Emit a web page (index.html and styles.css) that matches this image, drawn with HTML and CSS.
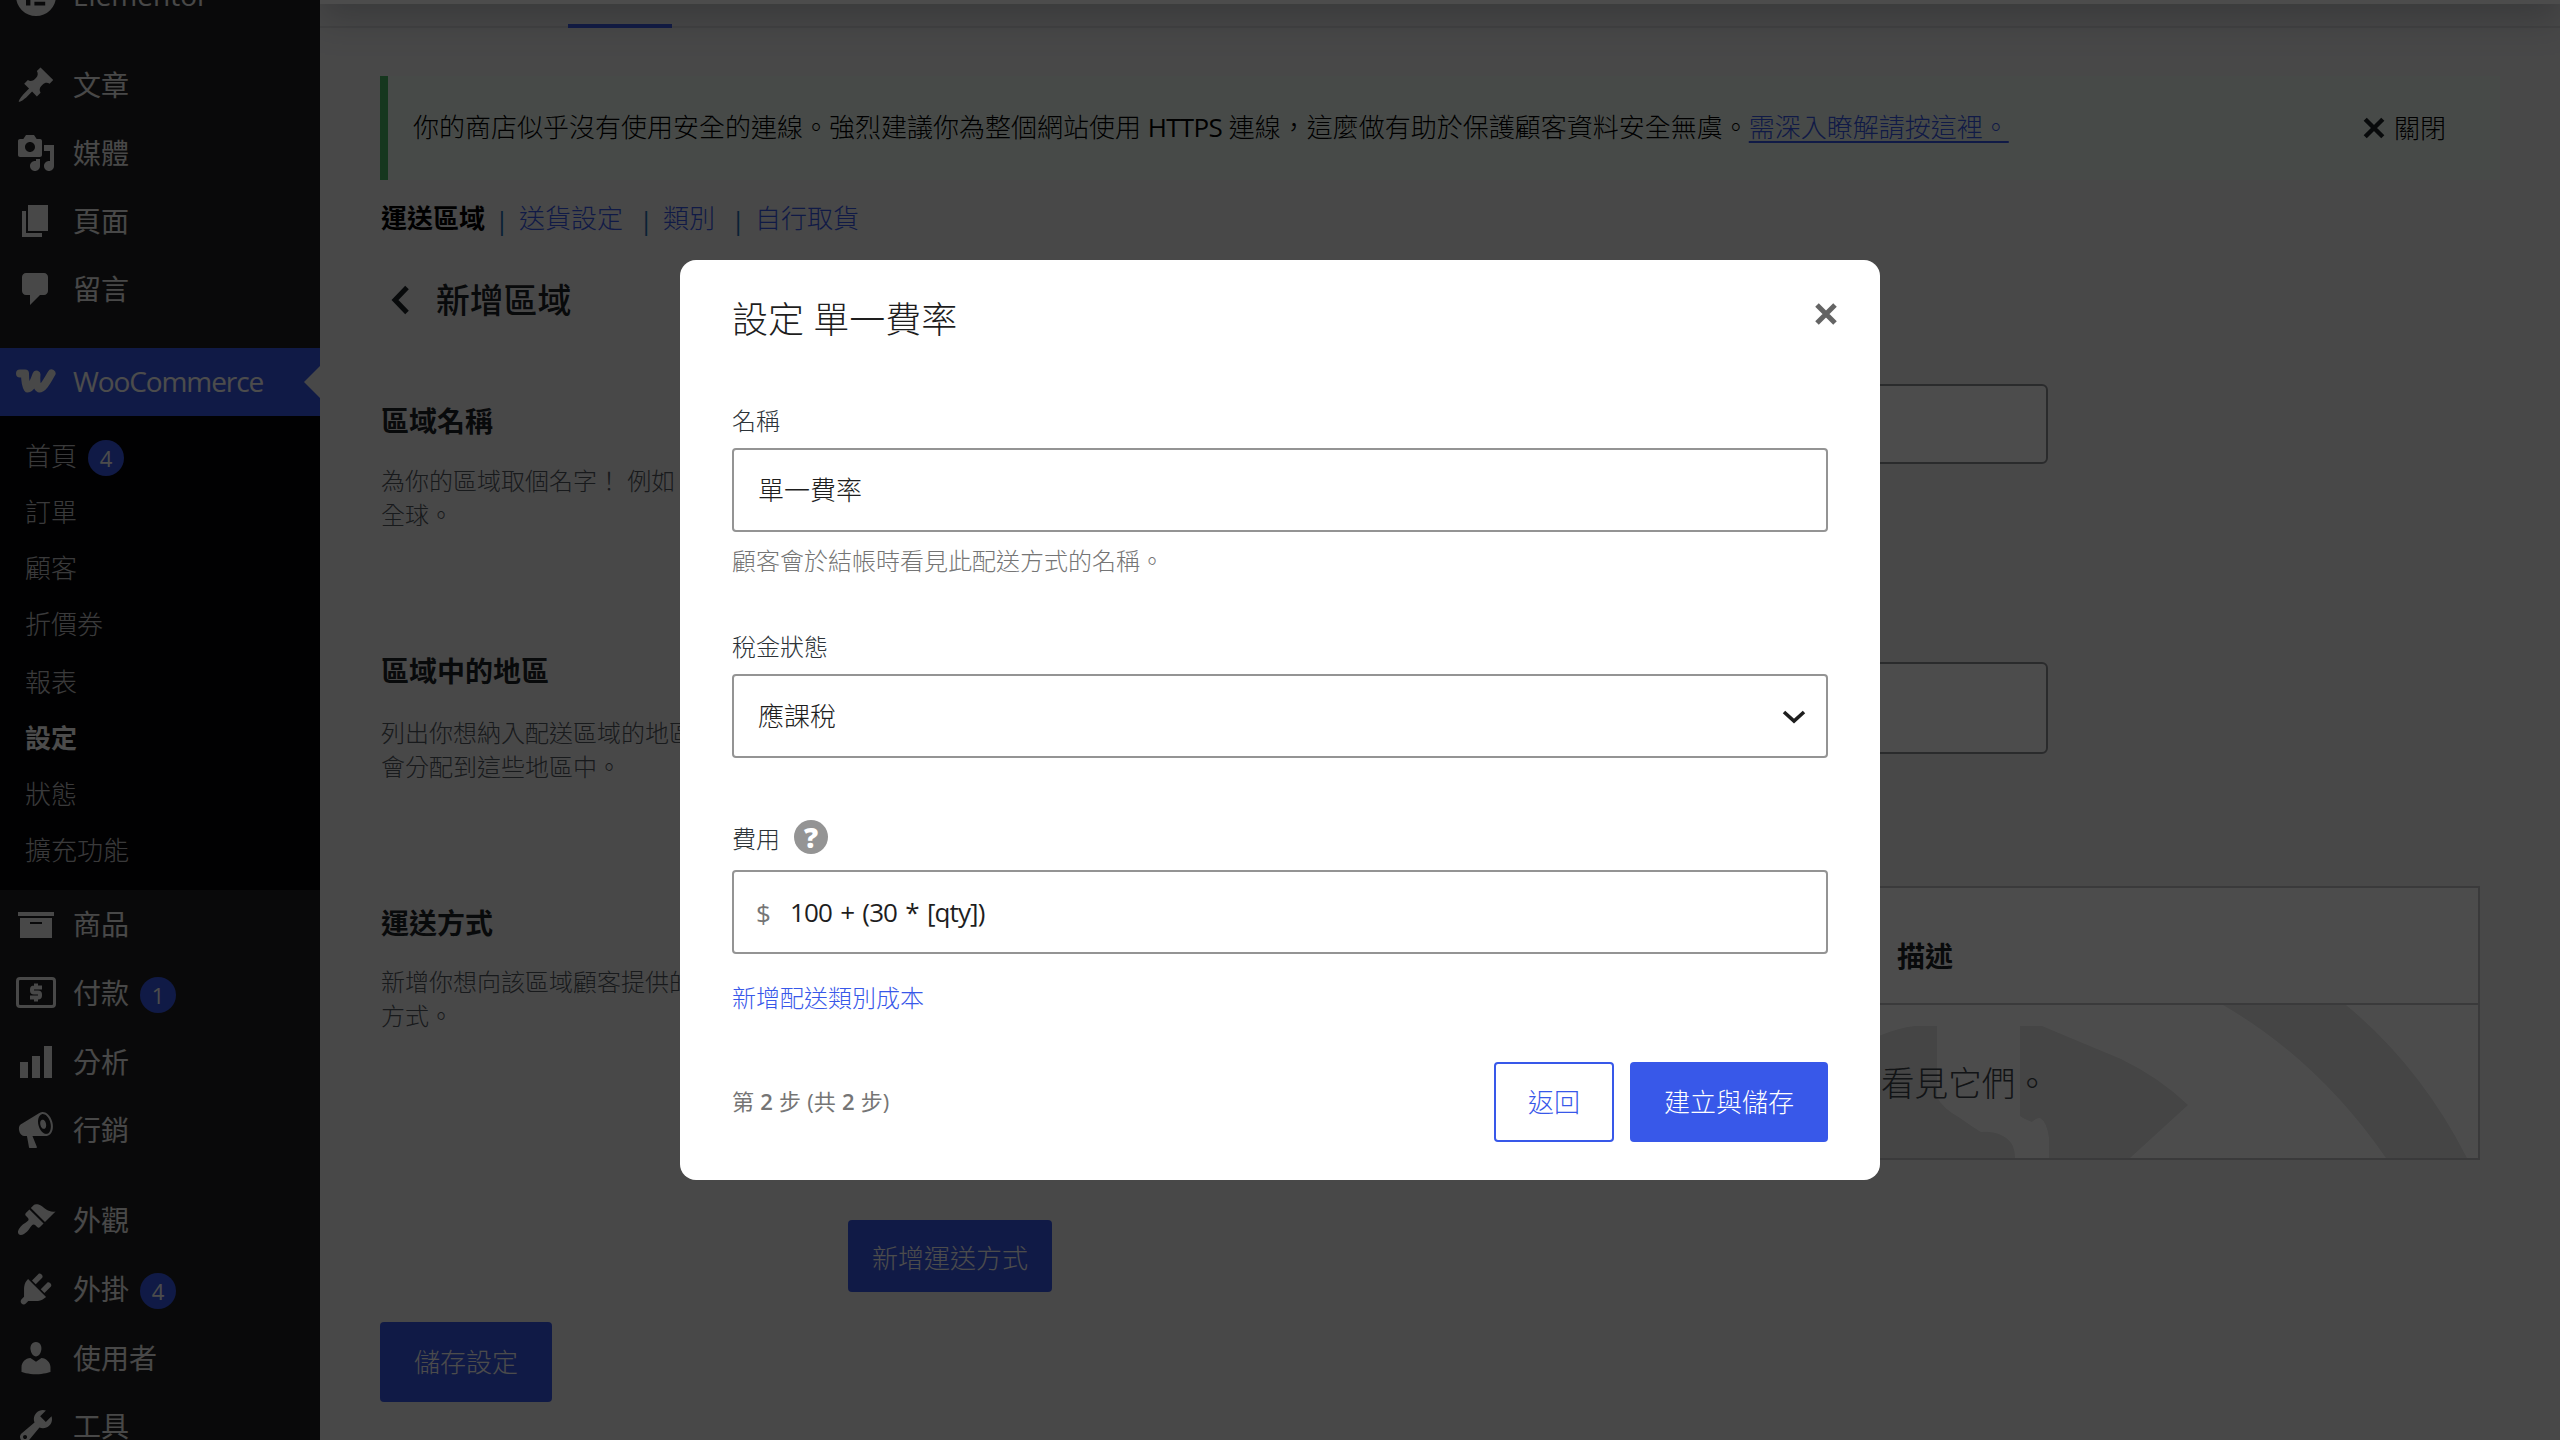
FILE: index.html
```html
<!DOCTYPE html>
<html lang="zh-Hant">

<head>
    <meta charset="UTF-8">
    <title>WooCommerce 設定</title>
    <link rel="stylesheet" href="styles.css">
</head>

<body>
    <div class="wrap">
        <ul class="sidebar">
            <li class="item">
                <svg class="icon" viewBox="0 0 20 20"><path fill-rule="evenodd" d="M10 0a10 10 0 1 0 0 20 10 10 0 0 0 0-20zM5 5.500h2.200v9.300H5zM9.200 5.500h5.400v1.800H9.200zM9.200 9.100h5.400v1.800H9.200zM9.200 12.900h5.400v1.900H9.200z"/></svg>
                Elementor
            </li>
            <li class="sep"></li>
            <li class="item">
                <svg class="icon" viewBox="0 0 20 20"><path d="M10.440 3.020l1.820-1.820 6.360 6.350-1.830 1.820c-1.050-.68-2.480-.57-3.410.36l-.75.75c-.92.93-1.040 2.350-.35 3.410l-1.830 1.820-2.410-2.410-2.800 2.790c-.42.42-3.380 2.710-3.800 2.290s1.860-3.390 2.280-3.810l2.790-2.790L4.100 9.360l1.830-1.820c1.050.69 2.480.57 3.400-.36l.75-.75c.93-.92 1.050-2.350.36-3.410z"/></svg>
                文章
            </li>
            <li class="item">
                <svg class="icon" viewBox="0 0 20 20"><path d="M13 11V4c0-.55-.45-1-1-1h-1.670L9 1H5L3.670 3H2c-.55 0-1 .45-1 1v7c0 .55.45 1 1 1h10c.55 0 1-.45 1-1zM7 4.500c1.380 0 2.500 1.120 2.500 2.500S8.380 9.500 7 9.500 4.500 8.380 4.500 7 5.620 4.500 7 4.500zM14 6h5v10.500c0 1.380-1.120 2.500-2.500 2.500S14 17.880 14 16.500s1.120-2.500 2.500-2.500c.17 0 .34.02.5.05V9h-3V6zm-4 8.050V13h2v3.500c0 1.380-1.120 2.500-2.500 2.500S7 17.880 7 16.500 8.120 14 9.500 14c.17 0 .34.02.5.05z"/></svg>
                媒體
            </li>
            <li class="item">
                <svg class="icon" viewBox="0 0 20 20"><path d="M6 15V2h10v13H6zm-1 1h8v2H3V5h2v11z"/></svg>
                頁面
            </li>
            <li class="item">
                <svg class="icon" viewBox="0 0 20 20"><path d="M5 2h9c1.100 0 2 .9 2 2v7c0 1.100-.9 2-2 2h-2l-5 5v-5H5c-1.100 0-2-.9-2-2V4c0-1.100.9-2 2-2z"/></svg>
                留言
            </li>
            <li class="sep sep-woo"></li>
            <li class="item current">
                <svg class="icon" viewBox="0 0 40 40"><path class="line" d="M4 11.500h5c0 6 .8 12 2.700 15 3.500 0 6.500-7.500 8.800-14-.5 7 .2 12 2.700 14 4.300 0 8.300-8.500 12.300-15"/></svg>
                <span class="latin">WooCommerce</span>
            </li>
            <li class="submenu">
                <a class="sub">首頁 <b class="badge">4</b></a>
                <a class="sub">訂單</a>
                <a class="sub">顧客</a>
                <a class="sub">折價券</a>
                <a class="sub sub-report">報表</a>
                <a class="sub on">設定</a>
                <a class="sub">狀態</a>
                <a class="sub">擴充功能</a>
            </li>
            <li class="item">
                <svg class="icon" viewBox="0 0 20 20"><path d="M19 4v2H1V4h18zM2 7h16v10H2V7zm11 3V9H7v1h6z"/></svg>
                商品
            </li>
            <li class="item has-badge">
                <svg class="icon" viewBox="0 0 40 40"><rect class="frame" x="1.500" y="5.500" width="37" height="28" rx="2.500"/><path class="dollar" d="M26 14.500h-8q-2 0-2 2v1q0 2 2 2h4q2 0 2 2v1q0 2-2 2h-8M20 10.500v4M20 24.500v4"/></svg>
                付款 <b class="badge">1</b>
            </li>
            <li class="item">
                <svg class="icon" viewBox="0 0 20 20"><path d="M18 18V2h-4v16h4zm-6 0V7H8v11h4zm-6 0v-8H2v8h4z"/></svg>
                分析
            </li>
            <li class="item">
                <svg class="icon" viewBox="0 0 20 20"><path d="M18.150 5.940c.46 1.620.38 3.220-.02 4.480-.42 1.280-1.260 2.180-2.300 2.480-.16.06-.26.06-.4.06-.06.02-.12.02-.18.02-.06.02-.14.02-.22.02h-6.800l2.220 5.500c.02.14-.06.26-.14.34-.08.1-.24.16-.34.16H6.950c-.1 0-.26-.06-.34-.16-.08-.08-.16-.2-.14-.34l-1-5.500H4.250l-.02-.02c-.5.06-1.080-.18-1.540-.62s-.88-1.080-1.060-1.880c-.24-.8-.2-1.560-.02-2.200.18-.62.58-1.080 1.060-1.300l.02-.02 9-5.400c.1-.06.18-.1.24-.16.06-.04.14-.08.24-.12.16-.08.28-.12.5-.18 1.040-.3 2.240.1 3.220.98s1.840 2.240 2.260 3.860zm-2.580 5.980h-.02c.4-.1.74-.34 1.040-.7.58-.7.86-1.760.86-3.040 0-.64-.1-1.300-.28-1.980-.34-1.360-1.020-2.500-1.780-3.240s-1.680-1.100-2.460-.88c-.82.22-1.400.96-1.700 2-.32 1.040-.28 2.360.06 3.720.38 1.360 1 2.500 1.800 3.240.78.74 1.620 1.100 2.480.88zm-2.540-7.080c.22-.04.42-.02.62.04.38.16.76.48 1.020 1s.42 1.200.42 1.780c0 .3-.04.56-.12.8-.18.48-.44.84-.86.94-.34.1-.8-.06-1.140-.4s-.64-.86-.78-1.500c-.18-.62-.12-1.240.02-1.720s.48-.84.82-.94z"/></svg>
                行銷
            </li>
            <li class="sep sep-look"></li>
            <li class="item">
                <svg class="icon" viewBox="0 0 20 20"><path d="M14.480 11.060L7.410 3.990l1.500-1.500c.5-.56 2.300-.47 3.510.32 1.210.8 1.430 1.280 2.910 2.100 1.180.64 2.450 1.260 4.450.85zm-.71.71L6.700 4.700 4.930 6.470c-.39.39-.39 1.020 0 1.410l1.060 1.060c.39.39.39 1.030 0 1.420-.6.6-1.430 1.110-2.210 1.690-.35.26-.7.53-1.010.84C1.430 14.230.4 16.080 1.400 17.070c.99 1 2.840-.03 4.180-1.360.31-.31.58-.66.85-1.020.57-.78 1.080-1.610 1.690-2.210.39-.39 1.020-.39 1.410 0l1.060 1.060c.39.39 1.020.39 1.410 0z"/></svg>
                外觀
            </li>
            <li class="item has-badge">
                <svg class="icon" viewBox="0 0 20 20"><path d="M13.110 4.360L9.870 7.600 8 5.730l3.240-3.240c.35-.34 1.050-.2 1.560.32.52.51.66 1.210.31 1.550zm-8 1.770l.91-1.120 9.010 9.010-1.190.84c-.71.71-2.630 1.160-3.820 1.160H6.140L4.900 17.260c-.59.59-1.540.59-2.120 0-.59-.58-.59-1.530 0-2.120l1.240-1.240v-3.880c0-1.130.4-3.190 1.090-3.890zm7.260 3.970l3.240-3.240c.34-.35 1.040-.21 1.550.31.52.51.66 1.210.31 1.550l-3.240 3.250z"/></svg>
                外掛 <b class="badge">4</b>
            </li>
            <li class="item">
                <svg class="icon" viewBox="0 0 20 20"><path d="M10 9.250c-2.270 0-2.730-3.440-2.730-3.440C7 4.020 7.820 2 9.970 2c2.160 0 2.980 2.020 2.710 3.810 0 0-.41 3.440-2.680 3.440zm0 2.570L12.720 10c2.390 0 4.520 2.330 4.520 4.530v2.490s-3.650 1.130-7.240 1.130c-3.650 0-7.240-1.130-7.240-1.130v-2.490c0-2.250 1.940-4.480 4.470-4.480z"/></svg>
                使用者
            </li>
            <li class="item">
                <svg class="icon" viewBox="0 0 20 20"><path d="M16.680 9.770c-1.340 1.340-3.300 1.670-4.950.99l-5.410 6.520c-.99.99-2.590.99-3.580 0s-.99-2.590 0-3.570l6.520-5.420c-.68-1.650-.35-3.610.99-4.950 1.280-1.280 3.120-1.620 4.720-1.060l-2.890 2.890 2.820 2.820 2.860-2.870c.53 1.580.18 3.390-1.080 4.650zM3.810 16.210c.4.39 1.040.39 1.430 0 .4-.4.4-1.040 0-1.430-.39-.4-1.030-.4-1.430 0-.39.39-.39 1.030 0 1.430z"/></svg>
                工具
            </li>
        </ul>

        <div class="main">
            <div class="header"></div>
            <div class="tabs"><span class="tab-active"></span></div>

            <div class="content">
                <div class="notice">
                    <p class="notice-text">你的商店似乎沒有使用安全的連線。強烈建議你為整個網站使用 <span class="https">HTTPS</span> 連線，這麼做有助於保護顧客資料安全無虞。<a class="notice-link">需深入瞭解請按這裡。</a></p>
                    <span class="dismiss">
                        <svg class="dismiss-x" viewBox="0 0 20 20"><path d="M2 2l16 16M18 2L2 18"/></svg>
                        關閉
                    </span>
                </div>

                <div class="sections">
                    <b>運送區域</b><i>|</i><a>送貨設定</a><i class="wide">|</i><a>類別</a><i class="wide">|</i><a>自行取貨</a>
                </div>

                <h2 class="title">
                    <svg class="back" viewBox="0 0 20 30"><path d="M17 2.500L5 15l12 12.500"/></svg>
                    新增區域
                </h2>

                <div class="row row-name">
                    <div class="label">
                        <h3>區域名稱</h3>
                        <p>為你的區域取個名字！ 例如<br>全球。</p>
                    </div>
                    <div class="field"><div class="box"></div></div>
                </div>
                <div class="row row-region">
                    <div class="label">
                        <h3>區域中的地區</h3>
                        <p>列出你想納入配送區域的地區<br>會分配到這些地區中。</p>
                    </div>
                    <div class="field"><div class="box"></div></div>
                </div>
                <div class="row row-methods">
                    <div class="label">
                        <h3>運送方式</h3>
                        <p>新增你想向該區域顧客提供的<br>方式。</p>
                    </div>
                    <div class="field">
                        <div class="methods">
                            <div class="methods-head"><span>描述</span></div>
                            <div class="methods-empty">
                                <svg class="globe" viewBox="1878 1005 600 153">
                                    <path d="M1870 1040Q1895 1028 1915 1026H1937V1097Q1942 1108 1960 1118Q1974 1128 1981 1132Q1993 1131 2003 1136Q2015 1142 2015 1158H1870z"/>
                                    <path d="M2020 1026H2042Q2080 1042 2121 1059Q2160 1078 2188 1105L2130 1158H2049V1138Q2047 1122 2040 1118Q2036 1118 2032 1122Q2024 1119 2020 1116z"/>
                                    <path d="M2223 1005H2346Q2420 1066 2467 1158H2386Q2318 1060 2223 1005z"/>
                                </svg>
                                <span>看見它們。</span>
                            </div>
                        </div>
                        <a class="btn btn-add">新增運送方式</a>
                    </div>
                </div>
                <a class="btn btn-save">儲存設定</a>
            </div>
        </div>
    </div>

    <div class="overlay">
        <div class="modal">
            <div class="modal-head">
                <h1>設定 單一費率</h1>
                <svg class="close" viewBox="0 0 24 24"><path d="M3 3l18 18M21 3L3 21"/></svg>
            </div>

            <label>名稱</label>
            <div class="input">單一費率</div>
            <p class="help">顧客會於結帳時看見此配送方式的名稱。</p>

            <label class="label-tax">稅金狀態</label>
            <div class="input">
                應課稅
                <svg class="arrow" viewBox="0 0 24 14"><path d="M2 2l10 9 10-9"/></svg>
            </div>

            <label class="label-cost">費用 <span class="tip">?</span></label>
            <div class="input"><span class="currency">$</span><span class="cost">100 + (30 * [qty])</span></div>
            <a class="add-class">新增配送類別成本</a>

            <div class="modal-foot">
                <span class="step">第 <b>2</b> 步 (共 <b>2</b> 步)</span>
                <a class="btn btn-outline">返回</a>
                <a class="btn btn-primary">建立與儲存</a>
            </div>
        </div>
    </div>
</body>

</html>
```

FILE: styles.css
```css
* {
    box-sizing: border-box;
    margin: 0;
    padding: 0;
}

body {
    height: 1440px;
    overflow: hidden;
    background: #f0f0f1;
    color: #1d2327;
    font-family: "Open Sans", "Noto Sans CJK TC", sans-serif;
    font-size: 26px;
    font-weight: 300;
}

a {
    color: #3858e9;
}

.wrap {
    display: flex;
    height: 1440px;
    overflow: hidden;
}

/* sidebar */
.sidebar {
    position: relative;
    z-index: 2;
    flex: none;
    width: 320px;
    height: 1500px;
    margin-top: -38px;
    background: #202122;
    color: #f0f0f1;
    list-style: none;
}

.item {
    position: relative;
    display: flex;
    align-items: center;
    height: 68px;
    padding: 0 0 2px 16px;
    font-size: 28px;
    font-weight: 400;
}

.has-badge {
    height: 70px;
}

.sep {
    height: 21px;
}

.sep-woo {
    height: 25px;
}

.sep-look {
    height: 22px;
}

.icon {
    flex: none;
    width: 40px;
    height: 40px;
    margin: 2px 17px 0 0;
    fill: #f0f0f1;
}

.icon .line,
.icon .frame,
.icon .dollar {
    fill: none;
    stroke: #f0f0f1;
    stroke-width: 8;
    stroke-linecap: round;
    stroke-linejoin: round;
}

.icon .frame {
    stroke-width: 3;
}

.icon .dollar {
    stroke-width: 4;
    stroke-linecap: butt;
}

.current {
    background: #3858e9;
    color: #fff;
}

.current::after {
    content: "";
    position: absolute;
    right: 0;
    top: 18px;
    border: 16px solid transparent;
    border-left-width: 0;
    border-right-color: #f0f0f1;
}

.latin {
    letter-spacing: -1.1px;
}

.submenu {
    padding: 12px 0;
    background: #060607;
}

.sub {
    display: flex;
    align-items: center;
    height: 56px;
    padding: 0 0 3px 25px;
    color: #c3c4c7;
}

.sub-report {
    margin-top: 2px;
}

.on {
    color: #fff;
    font-weight: 700;
}

.badge {
    width: 36px;
    height: 36px;
    margin: 6px 0 0 11px;
    border-radius: 18px;
    background: #3858e9;
    color: #fff;
    font-size: 22px;
    font-weight: 400;
    line-height: 36px;
    text-align: center;
}

/* page */
.main {
    flex: 1;
    min-width: 0;
}

.header {
    position: relative;
    z-index: 1;
    height: 120px;
    margin-top: -116px;
    background: #fff;
    box-shadow: 0 16px 32px rgba(85, 93, 102, 0.3);
}

.tabs {
    display: flex;
    height: 24px;
    padding-left: 248px;
    border-bottom: 2px solid #dcdcde;
}

.tab-active {
    width: 104px;
    height: 24px;
    border-bottom: 4px solid #3858e9;
}

.content {
    padding: 48px 60px 0;
}

.notice {
    display: flex;
    align-items: center;
    justify-content: space-between;
    height: 104px;
    padding: 0 54px 0 25px;
    border-left: 8px solid #4ab866;
    background: #eff9f1;
    color: #000;
}

.notice-text {
    padding-bottom: 5px;
    white-space: nowrap;
}

.notice-link {
    text-decoration: underline;
    text-decoration-thickness: 2px;
    text-underline-offset: 4px;
}

.https {
    font-weight: 400;
    letter-spacing: -0.7px;
}

.dismiss {
    display: flex;
    align-items: center;
    padding-bottom: 2px;
}

.dismiss-x {
    width: 22px;
    height: 22px;
    margin: 2px 9px 0 0;
    fill: none;
    stroke: #1d2327;
    stroke-width: 4;
}

.sections {
    display: flex;
    height: 40px;
    margin-top: 20px;
    padding-left: 1px;
    line-height: 37px;
}

.sections b {
    color: #000;
    font-weight: 700;
}

.sections i {
    width: 34px;
    color: #2271b1;
    font-style: normal;
    font-weight: 400;
    line-height: 40px;
    text-align: center;
}

.sections .wide {
    width: 40px;
    padding-left: 6px;
}

.title {
    display: flex;
    align-items: center;
    height: 60px;
    margin-top: 30px;
    padding-bottom: 4px;
    font-size: 33.8px;
    font-weight: 500;
}

.back {
    width: 20px;
    height: 30px;
    margin: 4px 26px 0 10px;
    fill: none;
    stroke: #1d2327;
    stroke-width: 5;
}

.row {
    display: grid;
    grid-template-columns: 468px 1fr;
}

.label {
    padding: 73px 0 0 1px;
}

.label h3 {
    font-size: 28px;
    font-weight: 700;
    line-height: 36px;
}

.label p {
    margin-top: 25px;
    color: #50575e;
    font-size: 24px;
    line-height: 34px;
}

.row-name {
    height: 250px;
}

.row-name .field {
    padding-top: 54px;
}

.row-region {
    height: 253px;
}

.row-region .label p {
    margin-top: 27px;
}

.row-region .field {
    padding-top: 82px;
}

.row-methods .label {
    padding-top: 72px;
}

.row-methods .label p {
    margin-top: 24px;
}

.row-methods .field {
    padding-top: 53px;
}

.box {
    width: 1200px;
    height: 80px;
    border: 2px solid #8c8f94;
    border-radius: 6px;
    background: #fff;
}

.row-region .box {
    height: 92px;
}

.methods {
    width: 1632px;
    height: 274px;
    border: 2px solid #c3c4c7;
    background: #fff;
}

.methods-head {
    height: 117px;
    padding: 48px 0 0 1047px;
    border-bottom: 2px solid #c3c4c7;
    font-size: 28px;
    font-weight: 700;
    line-height: 40px;
}

/* the end of the hint runs out past the dialog's right edge */
.methods-empty {
    position: relative;
    display: flex;
    align-items: center;
    height: 153px;
    padding-left: 1031px;
    font-size: 33.6px;
    color: #3c434a;
}

.methods-empty span {
    position: relative;
}

.globe {
    position: absolute;
    right: 0;
    top: 0;
    width: 600px;
    height: 153px;
    fill: #e6e6e6;
}

.btn {
    display: flex;
    align-items: center;
    justify-content: center;
    padding-bottom: 2px;
    border-radius: 4px;
    background: #3858e9;
    color: #fff;
}

.btn-add {
    width: 204px;
    height: 72px;
    margin-top: 60px;
    padding: 2px 0 0;
}

.btn-save {
    width: 172px;
    height: 80px;
    margin-top: 30px;
}

/* modal */
.overlay {
    position: fixed;
    inset: 0;
    z-index: 10;
    display: flex;
    align-items: center;
    justify-content: center;
    background: rgba(0, 0, 0, 0.7);
}

.modal {
    width: 1200px;
    height: 920px;
    padding: 0 52px;
    border-radius: 16px;
    background: #fff;
    color: #1e1e1e;
}

.modal-head {
    display: flex;
    align-items: center;
    justify-content: space-between;
    height: 117px;
}

.modal-head h1 {
    padding-bottom: 3px;
    font-size: 36px;
    font-weight: 300;
}

.close {
    width: 24px;
    height: 24px;
    margin: 0 -10px 9px 0;
    fill: none;
    stroke: #646464;
    stroke-width: 5;
}

.modal label {
    display: flex;
    align-items: center;
    height: 36px;
    margin: 24px 0 11px;
    color: #2c3338;
    font-size: 24px;
}

.modal .label-tax {
    margin-top: 49px;
}

.modal .label-cost {
    margin: 61px 0 15px;
}

.input {
    display: flex;
    align-items: center;
    height: 84px;
    padding: 0 20px 2px 24px;
    border: 2px solid #949494;
    border-radius: 4px;
}

.arrow {
    width: 24px;
    height: 14px;
    margin: 4px 0 0 auto;
    fill: none;
    stroke: #1e1e1e;
    stroke-width: 3.6;
}

.help {
    margin-top: 12px;
    color: #757575;
    font-size: 24px;
    line-height: 34px;
}

.tip {
    width: 34px;
    height: 34px;
    margin-left: 14px;
    border-radius: 50%;
    background: #949494;
    color: #fff;
    font-size: 28px;
    font-weight: 800;
    line-height: 34px;
    text-align: center;
}

.currency {
    width: 32px;
    margin-left: -2px;
    padding-top: 3px;
    color: #757575;
    font-weight: 400;
}

.cost {
    margin-left: 2px;
    padding-top: 2px;
    font-weight: 400;
    letter-spacing: -0.9px;
    word-spacing: 2.4px;
}

.add-class {
    display: block;
    margin-top: 27px;
    font-size: 24px;
    line-height: 34px;
}

.modal-foot {
    display: flex;
    gap: 16px;
    margin-top: 47px;
}

.step {
    margin-right: auto;
    color: #757575;
    font-size: 22px;
    font-weight: 400;
    line-height: 78px;
    word-spacing: 0.5px;
}

.step b {
    font-weight: 600;
}

.btn-outline {
    width: 120px;
    height: 80px;
    border: 2px solid #3858e9;
    background: #fff;
    color: #3858e9;
}

.btn-primary {
    width: 198px;
    height: 80px;
}
```
